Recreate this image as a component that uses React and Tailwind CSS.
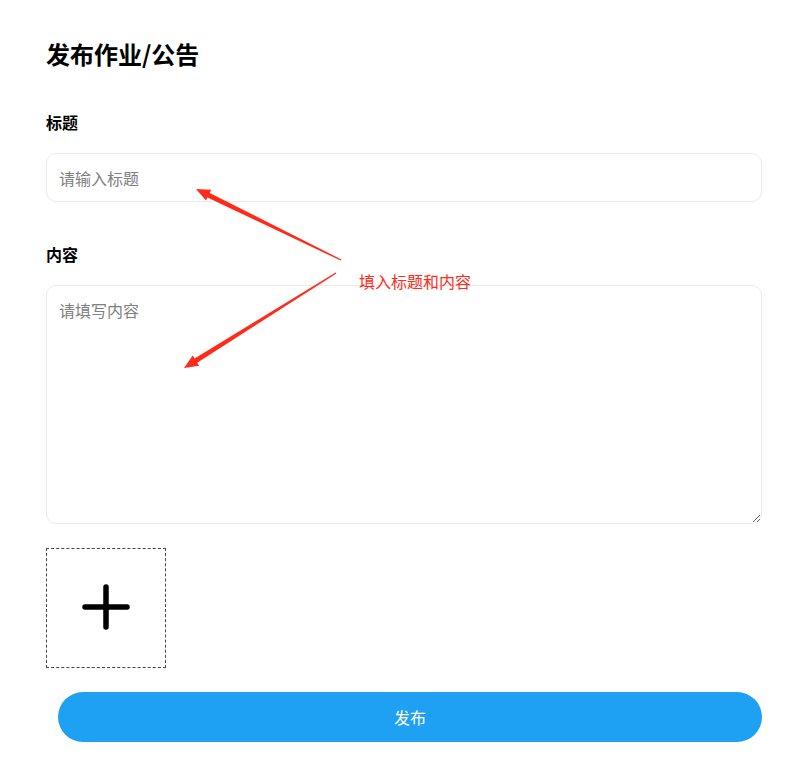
import React from "react";

export default function App() {
  return (
    <div
      className="relative min-h-[771px] w-[797px] bg-white pl-[46px] pr-[35px] pt-[38px] text-black"
      style={{ fontFamily: '"Noto Sans CJK SC", "Noto Sans", sans-serif' }}
    >
      {/* Page title */}
      <h1 className="text-2xl font-bold leading-8">发布作业/公告</h1>

      {/* Title field */}
      <div className="mt-[40px] text-base font-bold leading-6">标题</div>
      <input
        type="text"
        placeholder="请输入标题"
        className="mt-[19px] h-[49px] w-full rounded-[10px] border border-[#ebebeb] bg-white px-[12px] text-base outline-none placeholder:text-[#808080]"
      />

      {/* Content field */}
      <div className="mt-[40px] text-base font-bold leading-6">内容</div>
      <textarea
        placeholder="请填写内容"
        className="mt-[19px] block h-[239px] w-full rounded-[10px] border border-[#ebebeb] bg-white px-[12px] py-[12px] text-base leading-6 outline-none placeholder:text-[#808080]"
      />

      {/* Upload box */}
      <div className="mt-[24px] flex h-[120px] w-[120px] items-center justify-center border border-dashed border-[#444]">
        <svg width="48" height="48" viewBox="0 0 48 48">
          <path d="M24 3v40M3 23h42" stroke="#000" strokeWidth="5.5" strokeLinecap="round" fill="none" />
        </svg>
      </div>

      {/* Submit */}
      <button className="ml-[12px] mt-[24px] flex h-[50px] w-[704px] items-center justify-center rounded-full bg-[#1ea1f2] text-base text-white">
        发布
      </button>

      {/* Annotation overlay */}
      <svg className="pointer-events-none absolute left-0 top-0" width="797" height="771">
        <polygon
          points="341.3,259.4 209.7,193 211.2,189.8 196,189 206,200.6 207.5,197.4 340.7,260.6"
          fill="#ff2a1a"
        />
        <polygon
          points="335.6,272.4 194.6,358.5 192.7,355.5 184,368 199.1,365.7 197.2,362.7 336.4,273.6"
          fill="#ff2a1a"
        />
      </svg>
      <div className="absolute left-[359px] top-[269px] text-base leading-6 text-[#ff2a1a]">
        填入标题和内容
      </div>
    </div>
  );
}
